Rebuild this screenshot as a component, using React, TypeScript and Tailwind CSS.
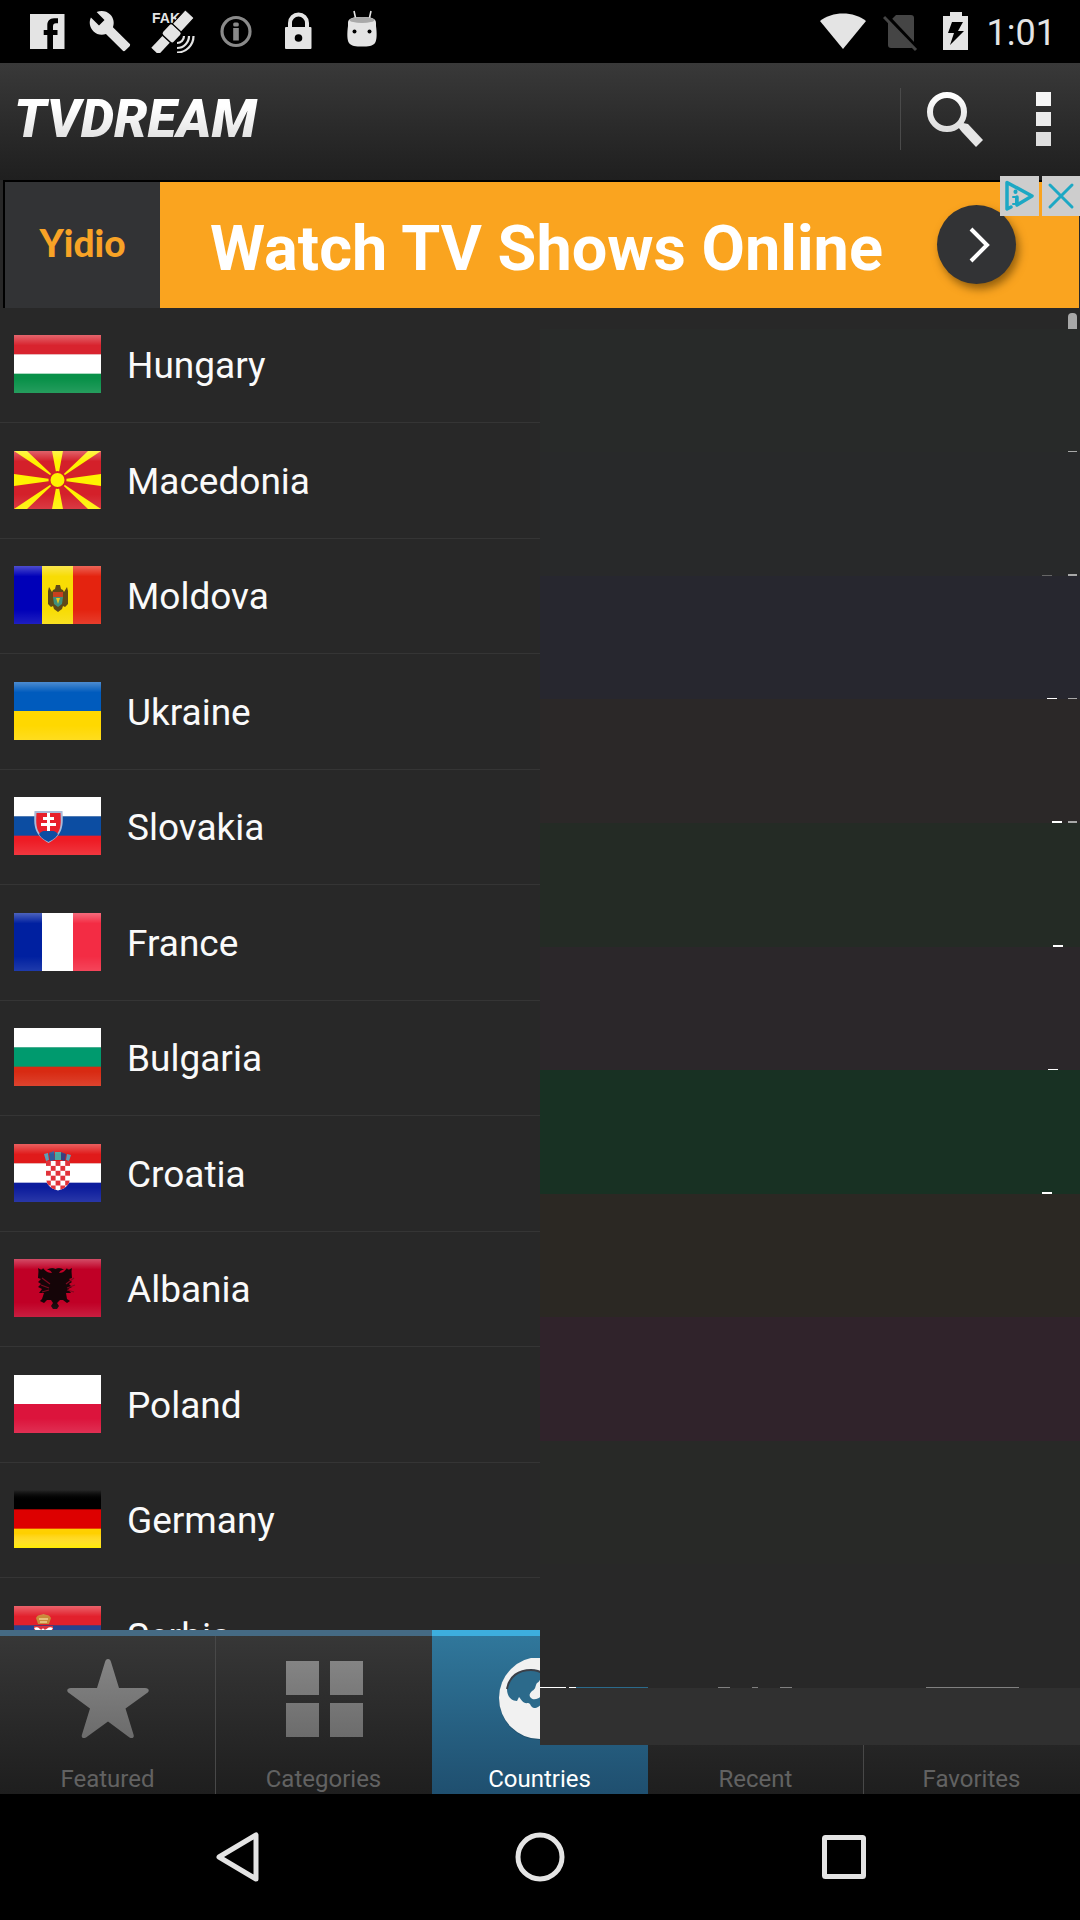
import React from "react";
import { MdBuild } from "react-icons/md";

/* ---------- Status bar ---------- */

function StatusBar() {
  const box = "h-11 w-11";
  return (
    <div className="flex h-[63px] shrink-0 items-start justify-between bg-black pt-[9px] pr-6 pl-[25px] text-[#e4e4e4]">
      <div className="flex gap-[19px]">
        <svg viewBox="0 0 44 44" className={box} fill="currentColor" aria-label="Facebook">
          <path d="M5 5h34.500v35H28V26h4.500v-5H28v-3.500c0-2 1-3.200 3-3.200h2V9.300h-4c-4.500 0-6.700 3-6.700 7V21h-3.600v5h3.600v14H5z" />
        </svg>
        <MdBuild className={box} aria-label="Wrench" />
        <svg viewBox="0 0 44 44" className={box} fill="currentColor" aria-label="Fake location">
          <text x="1" y="14" fontSize="14" fontWeight="700" fontFamily="Liberation Sans, sans-serif">FAK</text>
          <g transform="translate(21 24) rotate(-47)">
            <rect x="-25" y="-5" width="17" height="10" />
            <rect x="-8" y="-8" width="15" height="16" rx="3" stroke="#000" strokeWidth="1.500" />
            <rect x="7" y="-6" width="19" height="12" stroke="#000" strokeWidth="1" />
          </g>
          <g fill="none" stroke="currentColor" strokeWidth="2.200">
            <path d="M26 34a7 7 0 0 0 7-7" />
            <path d="M26 39a12 12 0 0 0 12-12" />
            <path d="M26 43.500a16.500 16.500 0 0 0 16.500-16.500" />
          </g>
        </svg>
        <svg viewBox="0 0 44 44" className={box} aria-label="Information">
          <circle cx="22" cy="22.500" r="14" fill="none" stroke="#8a8a8a" strokeWidth="3.200" />
          <rect x="19.200" y="13.500" width="5.600" height="4" rx="1.500" fill="#8a8a8a" />
          <rect x="19.200" y="19" width="5.600" height="12.500" fill="#8a8a8a" />
        </svg>
        <svg viewBox="0 0 44 44" className={box} aria-label="Lock">
          <path d="M13 20v-6a8.500 8.500 0 0 1 17 0v6" fill="none" stroke="currentColor" strokeWidth="4" />
          <rect x="8" y="18" width="26.500" height="22" rx="1" fill="currentColor" />
          <circle cx="21.500" cy="29" r="3.800" fill="#000" />
        </svg>
        <svg viewBox="0 0 44 44" className={box} aria-label="Android">
          <path d="M14 2l2 9M31 2l-2 9" stroke="currentColor" strokeWidth="1.600" />
          <path d="M8 14c0-5 5-6 14-6s14 1 14 6v3c1 7 1 14-1 17-2 3-7 3.500-13 3.500S11 37 9 34c-2-3-2-10-1-17z" fill="currentColor" />
          <ellipse cx="22" cy="11" rx="12.500" ry="3" fill="#a9a9a9" />
          <circle cx="14.500" cy="22.500" r="2" fill="#000" />
          <circle cx="29.500" cy="22.500" r="2" fill="#000" />
        </svg>
      </div>
      <div className="flex">
        <svg viewBox="0 0 48 44" className="h-11 w-12" fill="currentColor" aria-label="Wi-Fi">
          <path d="M24 40L1 12C13 2 35 2 47 12z" />
        </svg>
        <svg viewBox="0 0 36 44" className="ml-4 h-11 w-9" aria-label="No SIM">
          <path d="M13 6h15a3 3 0 0 1 3 3v27a3 3 0 0 1-3 3H8a3 3 0 0 1-3-3V14z" fill="#454545" />
          <path d="M4 7l31 33" stroke="#000" strokeWidth="4" />
          <path d="M1 8l32 33" stroke="#454545" strokeWidth="3" />
        </svg>
        <svg viewBox="0 0 26 44" className="ml-6 h-11 w-[26px]" aria-label="Battery charging">
          <path d="M7 3h12v4h6v34H0V7h7z" fill="currentColor" />
          <path d="M9 13h11l-5 9h6L7 36l4-12H5z" fill="#000" />
        </svg>
        <span className="ml-[18px] pt-[3px] text-[36px] leading-[42px]">1:01</span>
      </div>
    </div>
  );
}

/* ---------- Action bar ---------- */

function ActionBar() {
  return (
    <header className="flex h-[117px] shrink-0 items-center bg-linear-to-b from-[#393939] to-[#1f1f1f] pb-[5px] pl-[14px]">
      <h1 className="flex-1 bg-linear-to-b from-white from-30% to-[#d8d8d8] bg-clip-text text-[53px] leading-[60px] font-black text-transparent italic">
        TVDREAM
      </h1>
      <div className="h-[62px] w-px bg-[#4a4a4a]" />
      <button type="button" aria-label="Search" className="flex w-[106px] justify-center">
        <svg viewBox="0 0 60 60" className="h-[60px] w-[60px]">
          <defs>
            <linearGradient id="glass" x1="0" y1="0" x2="0" y2="1">
              <stop offset="0" stopColor="#fff" />
              <stop offset="1" stopColor="#ddd" />
            </linearGradient>
          </defs>
          <circle cx="23" cy="23" r="17" fill="none" stroke="url(#glass)" strokeWidth="6" />
          <path d="M34 38l5-4 5 1 15 16-7 7-14-15z" fill="#e6e6e6" />
        </svg>
      </button>
      <button type="button" aria-label="More options" className="flex w-[73px] flex-col items-center gap-[6px]">
        <span className="h-[14px] w-[15px] bg-[#f5f5f5]" />
        <span className="h-[14px] w-[15px] bg-[#ebebeb]" />
        <span className="h-[14px] w-[15px] bg-[#dedede]" />
      </button>
    </header>
  );
}

/* ---------- Advertisement ---------- */

function AdBanner() {
  return (
    <div className="relative h-32 shrink-0 bg-[#282828]">
      <a href="#ad" className="ml-[3px] flex h-full border-t-2 border-l-2 border-black pr-px">
        <span className="flex w-[155px] items-center justify-center bg-[#323335] pb-1 font-[Lato] text-[37px] leading-[44px] font-black text-[#f8a326]">
          Yidio
        </span>
        <span className="flex flex-1 items-center justify-between bg-[#faa41f] pr-[63px] pb-px pl-[50px]">
          <span className="pt-2 text-[63px] leading-[72px] font-bold text-white">Watch TV Shows Online</span>
          <span className="flex h-[79px] w-[79px] items-center justify-center rounded-full bg-[#323335] shadow-[3px_5px_8px_rgba(80,50,0,0.6)]">
            <svg viewBox="0 0 24 36" className="ml-[6px] h-9 w-6" fill="none" stroke="#fff" strokeWidth="4">
              <path d="M3 2l16 16L3 34" />
            </svg>
          </span>
        </span>
      </a>
      <div className="absolute -top-1 right-0 flex gap-[3px]">
        <button type="button" aria-label="Ad choices" className="h-10 w-[39px] bg-[#cdcdcd]">
          <svg viewBox="0 0 39 40" className="h-10 w-[39px]" fill="none" stroke="#1ca8c4" strokeWidth="3.500" strokeLinejoin="round" strokeLinecap="round">
            <path d="M11 31l-4 2V6.500L32 20 17 29V21" />
            <path d="M15.500 15.500v.5" strokeWidth="4" />
            <path d="M13 21h3v7h-3" strokeWidth="2" />
          </svg>
        </button>
        <button type="button" aria-label="Close ad" className="h-10 w-[38px] bg-[#cdcdcd]">
          <svg viewBox="0 0 38 40" className="h-10 w-[38px]" stroke="#1ca8c4" strokeWidth="3" strokeLinecap="round">
            <path d="M8 9l22 22M30 9L8 31" />
          </svg>
        </button>
      </div>
    </div>
  );
}

/* ---------- Flags ---------- */

function Horizontal({ colors }: { colors: string[] }) {
  const h = 58 / colors.length;
  return (
    <>
      {colors.map((c, i) => (
        <rect key={i} x="0" y={i * h} width="87" height={h + 0.5} fill={c} />
      ))}
    </>
  );
}

function Vertical({ colors }: { colors: string[] }) {
  return (
    <>
      {colors.map((c, i) => (
        <rect key={i} x={[0, 28, 59][i]} y="0" width={[28, 31, 28][i]} height="58" fill={c} />
      ))}
    </>
  );
}

function MacedoniaArt() {
  return (
    <>
      <rect width="87" height="58" fill="#d4202a" />
      <g fill="#fff200">
        <path d="M0 0h13L43.500 29zM87 0H74L43.500 29zM0 58h13L43.500 29zM87 58H74L43.500 29z" />
        <path d="M38 0h11l-5.500 29zM38 58h11l-5.500-29zM0 23v12l43.500-6zM87 23v12l-43.500-6z" />
      </g>
      <circle cx="43.500" cy="29" r="9" fill="#d4202a" />
      <circle cx="43.500" cy="29" r="7" fill="#fff200" />
    </>
  );
}

function MoldovaArt() {
  return (
    <>
      <Vertical colors={["#0000b8", "#f8dc04", "#e4230f"]} />
      <path
        d="M42 19h4l1 4 2 1 1 2 3-5 1 4v13l-3 3-2-1-1 3-4 3-4-3-1-3-2 1-3-3V25l1-4 3 5 1-2 2-1z"
        fill="#5f4a18"
      />
      <path d="M39 26h10v5H39z" fill="#c8401e" />
      <path d="M39 31h10l-1 7-4 3-4-3z" fill="#3f8f7c" />
      <path d="M42 32h4l-2 6z" fill="#e8c820" />
    </>
  );
}

function SlovakiaArt() {
  return (
    <>
      <Horizontal colors={["#ffffff", "#0c4da2", "#ee1c25"]} />
      <path d="M20.500 14h28c1 16 0 24-14 32-14-8-15-16-14-32z" fill="#a9bad8" />
      <path d="M22.500 16h24c1 14 0 21-12 28-12-7-13-14-12-28z" fill="#e8202c" />
      <path d="M25 37c3-4 6-3 9.500-3s6.500-1 9.500 3c-2 4-5 5.500-9.500 8-4.500-2.500-7.500-4-9.500-8z" fill="#0c4da2" />
      <path d="M34.500 16v18M29 21.500h11M27 27.500h15" stroke="#fff" strokeWidth="3" />
    </>
  );
}

function CroatiaArt() {
  const cells: React.ReactElement[] = [];
  for (let r = 0; r < 6; r++)
    for (let c = 0; c < 5; c++)
      if ((r + c) % 2 === 0)
        cells.push(<rect key={`${r}-${c}`} x={32 + c * 4.8} y={17 + r * 4.9} width="4.800" height="4.900" fill="#e0323a" />);
  return (
    <>
      <Horizontal colors={["#e01a1a", "#ffffff", "#0c1c9c"]} />
      <defs>
        <clipPath id="shield">
          <path d="M32 17h24v16c0 9-6 12-12 13.500C38 45 32 42 32 33z" />
        </clipPath>
      </defs>
      <g clipPath="url(#shield)">
        <rect x="32" y="17" width="24" height="30" fill="#fff" />
        {cells}
      </g>
      <path d="M30 10l4-1 1 7-3 1zM53 10l4 1-2 6-3-1z" fill="#5a9fb8" />
      <path d="M35 9l5-2 1 9-5 1z" fill="#2f5a9c" />
      <path d="M41 8h6v8h-6z" fill="#4ba7a0" />
      <path d="M47 8l5 2-1 7-4-1z" fill="#3a3f80" />
    </>
  );
}

function AlbaniaArt() {
  return (
    <>
      <rect width="87" height="58" fill="#c00026" />
      <path
        d="M44 13c-2-5-8-5-11-2 3 0 4 1 5 3-4 0-7-2-9-5-1 3-3 1-5 0 1 4 0 7 0 10l3 1-3 3 3 2-3 3 4 2-3 4 5 0-2 6-2 2 4 2 3-3 4 0 2 3-2 3 2 3h4l2-3-2-3 3-3h3l4 3 3-2-3-2-1-6h5l-3-4 4-2-3-3 3-2-3-3 3-1c0-3-1-6 0-10-2 1-4 3-5 0-2 3-4 5-8 5 1-2 2-3 5-3-3-3-9-3-11 2z"
        fill="#150508"
      />
      <path d="M28 19l8 6M27 26l8 3M28 33l7-2M60 19l-8 6M61 26l-8 3M60 33l-7-2" stroke="#7c0a20" strokeWidth="1.200" />
    </>
  );
}

function SerbiaArt() {
  return (
    <>
      <Horizontal colors={["#e2202c", "#27438f", "#ffffff"]} />
      <path d="M22 12c2-4 6-3 7.500-4 1.500 1 5.500 0 7.500 4l-2 6H24z" fill="#c98a3a" />
      <path d="M25 13h9M26 16h7" stroke="#f0d090" strokeWidth="1.500" />
      <path d="M20 20h19v10c0 8-5 12-9.500 14C25 42 20 38 20 30z" fill="#d8303c" />
      <path d="M20 22c6-3 6 5 9 0 3 5 4-3 10 0l-5 7 4 8-8-5-8 5 3-8z" fill="#fff" />
    </>
  );
}

const countries: { name: string; art: React.ReactElement; dark?: boolean }[] = [
  { name: "Hungary", art: <Horizontal colors={["#d8232e", "#ffffff", "#089048"]} /> },
  { name: "Macedonia", art: <MacedoniaArt /> },
  { name: "Moldova", art: <MoldovaArt /> },
  { name: "Ukraine", art: <Horizontal colors={["#005bbd", "#ffd800"]} /> },
  { name: "Slovakia", art: <SlovakiaArt /> },
  { name: "France", art: <Vertical colors={["#0020a0", "#ffffff", "#f32c44"]} /> },
  { name: "Bulgaria", art: <Horizontal colors={["#ffffff", "#009a6e", "#d82a12"]} /> },
  { name: "Croatia", art: <CroatiaArt /> },
  { name: "Albania", art: <AlbaniaArt /> },
  { name: "Poland", art: <Horizontal colors={["#ffffff", "#dc143c"]} /> },
  { name: "Germany", art: <Horizontal colors={["#000000", "#dd0000", "#ffd000"]} />, dark: true },
  { name: "Serbia", art: <SerbiaArt /> },
];

function Flag({ name, art, dark }: { name: string; art: React.ReactElement; dark?: boolean }) {
  return (
    <svg viewBox="0 0 87 58" className="h-[58px] w-[87px]" aria-label={`Flag of ${name}`}>
      <defs>
        <linearGradient id={`gloss-${name}`} x1="0" y1="0" x2="0" y2="1">
          <stop offset="0" stopColor={dark ? "#282828" : "#fff"} stopOpacity={dark ? 1 : 0.3} />
          <stop offset="0.180" stopColor={dark ? "#000" : "#fff"} stopOpacity="0" />
          <stop offset="0.750" stopColor="#fff" stopOpacity="0" />
          <stop offset="1" stopColor={dark ? "#ffff00" : "#fff"} stopOpacity={dark ? 0.6 : 0.12} />
        </linearGradient>
      </defs>
      {art}
      <rect width="87" height="58" fill={`url(#gloss-${name})`} />
    </svg>
  );
}

function CountryList() {
  return (
    <ul className="min-h-0 flex-1 overflow-y-auto [scrollbar-width:none]">
      {countries.map((c) => (
        <li key={c.name} className="border-b border-[#353535] odd:h-[115px] even:h-[116px]">
          <button type="button" className="flex h-full w-full items-center gap-[26px] pb-[2px] pl-[14px] text-left text-[37px] leading-[44px] text-[#fafafa]">
            <Flag {...c} />
            <span className="pt-1">{c.name}</span>
          </button>
        </li>
      ))}
    </ul>
  );
}

/* ---------- Panel over the right half ---------- */

const bands = [
  { cls: "h-[123px] bg-[#282a29]", bar: "h-px", knob: "" },
  { cls: "h-[124px] bg-[#28292a]", bar: "h-[2px]", knob: "mr-[16px] h-px bg-[#666]" },
  { cls: "h-[123px] bg-[#27272f]", bar: "h-px", knob: "mr-[11px] h-px bg-white" },
  { cls: "h-[124px] bg-[#2b2828]", bar: "h-[2px]", knob: "mr-[6px] h-[2px] bg-white" },
  { cls: "h-[124px] bg-[#242b25]", bar: "", knob: "mr-[14px] h-[2px] bg-white" },
  { cls: "h-[123px] bg-[#2b272a]", bar: "", knob: "mr-[19px] h-px bg-white" },
  { cls: "h-[124px] bg-[#183123]", bar: "", knob: "mr-[25px] h-[2px] bg-white" },
  { cls: "h-[123px] bg-[#2b2823]", bar: "", knob: "" },
  { cls: "h-[124px] bg-[#30232b]", bar: "", knob: "" },
  { cls: "h-[123px] bg-[#282927]", bar: "", knob: "" },
  { cls: "h-[123px] bg-[#282828]", bar: "", knob: "" },
];

function SidePanel() {
  return (
    <div className="absolute top-[21px] right-0 flex w-1/2 flex-col">
      {bands.map((b, i) => (
        <div key={i} className={`${b.cls} flex items-end justify-end pr-[3px]`}>
          {b.knob && <span className={`${b.knob} w-[10px]`} />}
          {b.bar && <span className={`${b.bar} w-[9px] bg-[#a8a8a8]`} />}
        </div>
      ))}
      <div className="flex h-px bg-[#282828]">
        <span className="w-[26px] bg-white" />
        <span className="ml-[3px] w-[7px] bg-white" />
        <span className="w-[72px] bg-[#2b6a8b]" />
        <span className="ml-[70px] w-3 bg-[#808080]" />
        <span className="ml-[22px] w-[6px] bg-[#808080]" />
        <span className="ml-[22px] w-3 bg-[#808080]" />
        <span className="ml-[134px] w-[93px] bg-[#808080]" />
      </div>
      <div className="h-[57px] bg-[#303030]" />
    </div>
  );
}

/* ---------- Tabs ---------- */

const tabIcons: Record<string, React.ReactElement> = {
  Featured: (
    <path
      d="M41 1c1.500 0 2.500 1 3 3l8 26h26c4 0 5 3 2 5L58.500 50.500l8 26c1 3-1 4.500-4 3L41 63.500l-22 16c-3 1.500-5 0-4-3l8-26L2 35c-3-2-2-5 2-5h26l8-26c.5-2 1.500-3 3-3z"
      fill="url(#tabgrey)"
    />
  ),
  Categories: (
    <path d="M3 3h33v34H3zM47 3h33v34H47zM3 45h33v34H3zM47 45h33v34H47z" fill="url(#tabgrey)" />
  ),
  Countries: (
    <>
      <circle cx="41" cy="41" r="41" fill="#1d4863" opacity="0.600" />
      <circle cx="41" cy="40" r="41" fill="#f1f1f1" />
      <path d="M8 31C10 18 20 12 32 12c7 0 10 2 13 4-4 3-3 7-7 9-2 3-1 6-5 8-3 3-3 5-1 7 3 3 8 0 11-2v8c-3 2-4 4-8 4-4-1-3-5-6-5-5 1-7-4-9-6l-2 4c-6 0-10-5-10-12z" fill="#2c6a8b" />
      <path d="M8 31C10 18 20 12 32 12c7 0 10 2 13 4" fill="none" stroke="#3a3f48" strokeWidth="2" />
    </>
  ),
  Recent: (
    <g fill="none" stroke="url(#tabgrey)" strokeWidth="8">
      <circle cx="41" cy="40" r="34" />
      <path d="M41 20v22l14 8" />
    </g>
  ),
  Favorites: (
    <path d="M41 76L8 42C-4 26 6 6 22 6c9 0 15 5 19 12C45 11 51 6 60 6c16 0 26 20 14 36z" fill="url(#tabgrey)" />
  ),
};

function TabBar() {
  return (
    <nav className="grid h-[164px] shrink-0 grid-cols-5" aria-label="Sections">
      {Object.entries(tabIcons).map(([name, icon]) => {
        const active = name === "Countries";
        const look = active
          ? "border-[#3daede] from-[#30779b] to-[#1f4f6f] text-white"
          : "border-[#456a84] from-[#373737] to-[#1e1e1e] text-[#626262]";
        const edge = name === "Featured" || name === "Recent" ? "shadow-[inset_-1px_0_0_#484848]" : "";
        return (
          <button
            key={name}
            type="button"
            aria-current={active ? "page" : undefined}
            className={`flex flex-col items-center border-t-[6px] bg-linear-to-b pt-[22px] pr-px text-[24px] leading-[28px] ${look} ${edge}`}
          >
            <svg viewBox="0 0 82 82" className="h-[82px] w-[82px]">
              <defs>
                <linearGradient id="tabgrey" gradientUnits="userSpaceOnUse" x1="0" y1="0" x2="0" y2="82">
                  <stop offset="0" stopColor="#858585" />
                  <stop offset="1" stopColor="#6b6b6b" />
                </linearGradient>
              </defs>
              {icon}
            </svg>
            <span className="mt-[25px]">{name}</span>
          </button>
        );
      })}
    </nav>
  );
}

/* ---------- System navigation ---------- */

function SystemNav() {
  return (
    <nav className="grid h-[126px] shrink-0 grid-cols-3 bg-black px-[85px]" aria-label="System">
      {[
        { label: "Back", shape: <path d="M47 6v44L10 28z" /> },
        { label: "Home", shape: <circle cx="28" cy="28" r="22" /> },
        { label: "Overview", shape: <rect x="9.500" y="8.500" width="39" height="39" rx="1" /> },
      ].map((b) => (
        <button key={b.label} type="button" aria-label={b.label} className="flex items-center justify-center">
          <svg viewBox="0 0 56 56" className="h-14 w-14" fill="none" stroke="#e4e4e4" strokeWidth="5" strokeLinejoin="round">
            {b.shape}
          </svg>
        </button>
      ))}
    </nav>
  );
}

export default function App() {
  return (
    <div className="flex h-screen flex-col overflow-hidden bg-[#282828] font-[Roboto,sans-serif]">
      <StatusBar />
      <ActionBar />
      <AdBanner />
      <main className="relative flex min-h-0 flex-1 flex-col">
        <CountryList />
        <TabBar />
        <span className="absolute top-[5px] right-[3px] h-4 w-[9px] rounded-t bg-[#a8a8a8]" />
        <SidePanel />
      </main>
      <SystemNav />
    </div>
  );
}
